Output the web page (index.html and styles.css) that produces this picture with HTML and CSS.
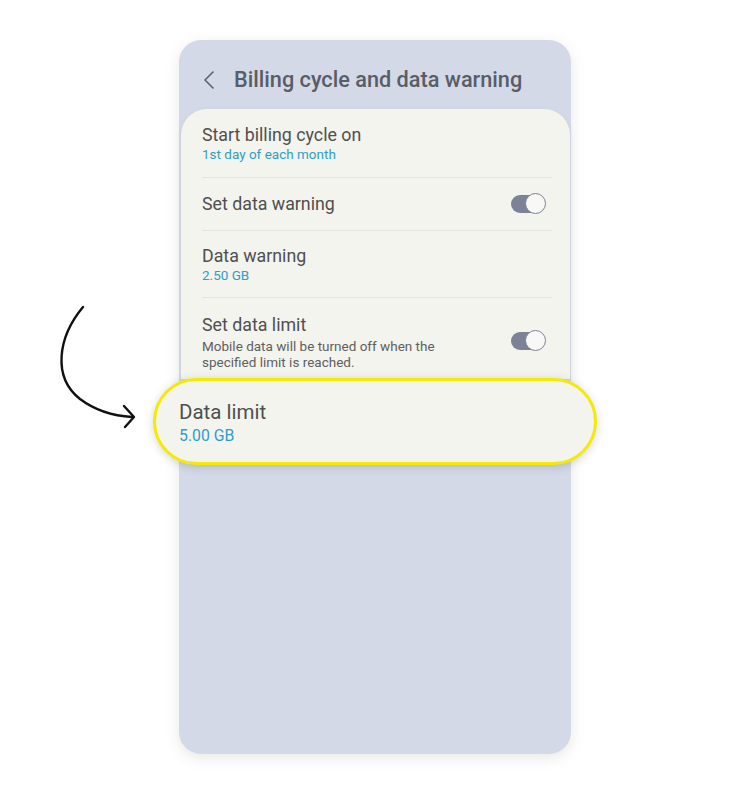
FILE: index.html
```html
<!DOCTYPE html>
<html>
<head>
<meta charset="utf-8">
<link rel="stylesheet" href="styles.css">
</head>
<body>
<div class="stage">
  <svg class="arrow" width="100" height="140" viewBox="0 0 100 140">
    <path d="M33 8 C 8 38, 2 78, 30 100 C 46 112, 64 117, 82 118" fill="none" stroke="#111" stroke-width="2.4" stroke-linecap="round"/>
    <path d="M74 107 L84 118 L75 128" fill="none" stroke="#111" stroke-width="2.4" stroke-linecap="round" stroke-linejoin="round"/>
  </svg>
  <div class="phone">
    <div class="header">
      <svg class="back" width="12" height="20" viewBox="0 0 12 20"><path d="M10 2 L2 10 L10 18" fill="none" stroke="#5c616b" stroke-width="1.6" stroke-linecap="round" stroke-linejoin="round"/></svg>
      <span class="title">Billing cycle and data warning</span>
    </div>
    <div class="card">
      <div class="row r1">
        <div class="text">
          <div class="main">Start billing cycle on</div>
          <div class="sub blue">1st day of each month</div>
        </div>
      </div>
      <div class="row r2">
        <div class="text"><div class="main">Set data warning</div></div>
        <div class="toggle"><span class="thumb"></span></div>
      </div>
      <div class="row r3">
        <div class="text">
          <div class="main">Data warning</div>
          <div class="sub blue">2.50 GB</div>
        </div>
      </div>
      <div class="row r4">
        <div class="text">
          <div class="main">Set data limit</div>
          <div class="sub grey multi">Mobile data will be turned off when the<br>specified limit is reached.</div>
        </div>
        <div class="toggle t4"><span class="thumb"></span></div>
      </div>
    </div>
    <div class="highlight">
      <div class="hmain">Data limit</div>
      <div class="hsub">5.00 GB</div>
    </div>
  </div>
</div>
</body>
</html>
```
FILE: styles.css
```css
html, body {
  margin: 0;
  padding: 0;
  background: #ffffff;
  font-family: Roboto, "Noto Sans", "Liberation Sans", sans-serif;
}
.stage {
  position: relative;
  width: 750px;
  height: 794px;
  padding: 40px 0 0 179px;
  box-sizing: border-box;
}
.arrow {
  position: absolute;
  left: 50px;
  top: 299px;
}
.phone {
  position: relative;
  width: 392px;
  height: 714px;
  background: #d3d9e6;
  border-radius: 22px;
  box-shadow: 0 4px 14px rgba(120, 130, 110, 0.18);
}
.header {
  height: 69px;
  display: flex;
  align-items: center;
  padding-left: 24px;
  box-sizing: border-box;
  padding-top: 10px;
}
.back { margin-right: 19px; }
.title {
  font-size: 21.7px;
  font-weight: 500;
  color: #585d67;
}
.card {
  margin: 0 1px 0 2px;
  background: #f3f4ee;
  border-radius: 26px 26px 0 0;
  padding: 0 18px 0 21px;
  height: 270px;
  box-shadow: 0 2px 6px rgba(0,0,0,0.06);
}
.row {
  display: flex;
  align-items: center;
  justify-content: space-between;
  border-bottom: 1px solid #e4e5df;
  box-sizing: border-box;
}
.row.r4 { border-bottom: none; align-items: flex-start; }
.r1 { height: 69px; padding-top: 2px; }
.r2 { height: 53px; }
.r3 { height: 67px; padding-top: 1px; }
.r4 { height: 80px; padding-top: 17px; }
.main {
  font-size: 17.8px;
  line-height: 20px;
  color: #4f4f4f;
}
.sub {
  font-size: 13.5px;
  line-height: 15.5px;
  margin-top: 2px;
}
.sub.multi { line-height: 16px; margin-top: 3px; }
.blue { color: #2f9ec6; }
.grey { color: #5f5f5f; }
.toggle {
  position: relative;
  width: 34px;
  height: 18px;
  background: #7d8296;
  border-radius: 9px;
  margin-right: 7px;
}
.t4 { margin-top: 17px; }
.thumb {
  position: absolute;
  right: -1px;
  top: -2px;
  width: 19px;
  height: 19px;
  border-radius: 50%;
  background: #f8f8f6;
  border: 1.2px solid #7d8296;
}
.highlight {
  position: absolute;
  left: -26px;
  top: 338px;
  width: 444px;
  height: 87px;
  box-sizing: border-box;
  border: 3.5px solid #f4ea04;
  border-radius: 44px;
  background: #f3f4ee;
  box-shadow: 0 2px 10px rgba(0,0,0,0.16);
  padding: 19px 0 0 23px;
}
.hmain {
  font-size: 20.5px;
  line-height: 24px;
  color: #4f4f4f;
}
.hsub {
  font-size: 15.8px;
  line-height: 18px;
  color: #2f9ec6;
  margin-top: 3px;
}
```
